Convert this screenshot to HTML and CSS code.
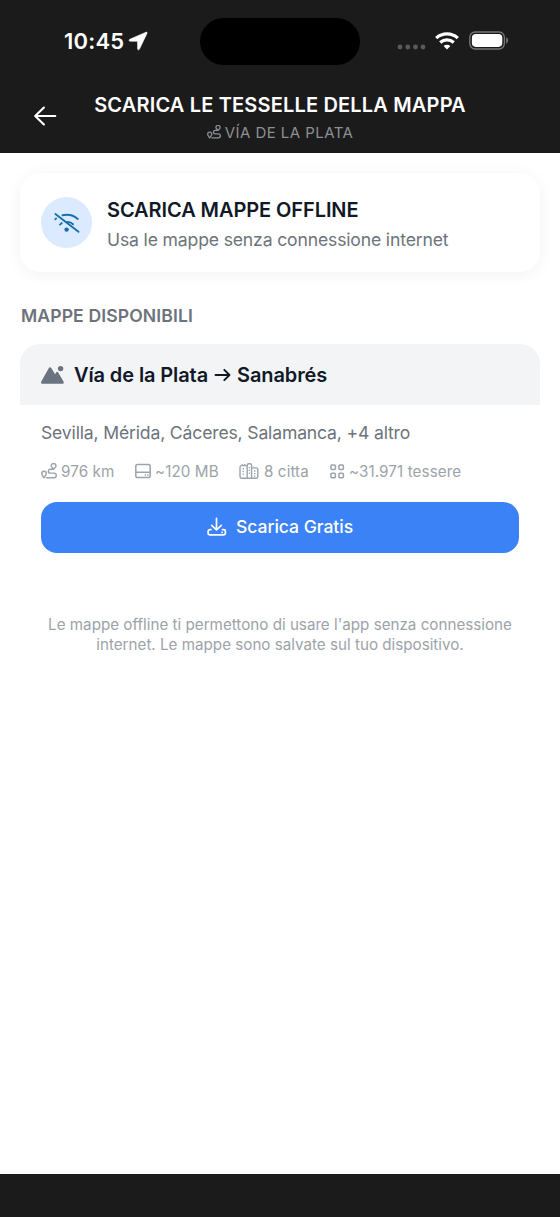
FILE: index.html
```html
<!DOCTYPE html>
<html lang="it">
<head>
<meta charset="utf-8">
<title>Scarica le tesselle della mappa</title>
<link rel="stylesheet" href="styles.css">
</head>
<body>
<div class="screen">
  <header class="top">
    <div class="status">
      <div class="clock">
        <span class="time">10:45</span>
        <svg class="loc" width="20" height="20" viewBox="0 0 20 20"><path d="M18.1 1.2 1.8 8.3c-1.1.5-.8 1.9.3 1.9l7.4.1.1 7.5c0 1.2 1.4 1.4 1.900.3L19 2.300c.3-.8-.2-1.400-.9-1.100z" fill="#fff" stroke="#fff" stroke-width=".6"/></svg>
      </div>
      <div class="island"></div>
      <div class="signals">
        <svg width="29" height="6" viewBox="0 0 29 6" fill="#5a5a5c"><circle cx="3" cy="3" r="2.4"/><circle cx="10.8" cy="3" r="2.4"/><circle cx="18.5" cy="3" r="2.4"/><circle cx="26" cy="3" r="2.4"/></svg>
        <svg class="wifi" width="24" height="18" viewBox="0 0 24 18" fill="none" stroke="#fff" stroke-width="3.3"><path d="M1.2 6.1C7.4.5 16.6.5 22.8 6.1"/><path d="M5.2 10.4c4-3.500 9.600-3.500 13.600 0"/><path d="M12 17.400l-3.400-3.400c2-1.700 4.800-1.700 6.800 0z" fill="#fff" stroke="none"/></svg>
        <svg class="battery" width="40" height="20" viewBox="0 0 40 20"><rect x=".8" y="1" width="34.6" height="17" rx="5.4" fill="none" stroke="#777779" stroke-width="1.3"/><rect x="2.900" y="3.100" width="30.400" height="12.800" rx="3.800" fill="#fff"/><path d="M37.2 6.300c2.500 1 2.500 5.400 0 6.400z" fill="#777779"/></svg>
      </div>
    </div>
    <div class="nav">
      <svg class="back" width="24" height="20" viewBox="0 0 24 20" fill="none" stroke="#fff" stroke-width="2.1" stroke-linecap="round" stroke-linejoin="round"><path d="M22.300 10H2.300M10.900 1.500 2.200 10l8.700 8.500"/></svg>
      <div class="titles">
        <h1 class="title">SCARICA LE TESSELLE DELLA MAPPA</h1>
        <div class="subtitle">
          <svg class="route-small" width="14" height="14" viewBox="0 0 16 16" fill="none" stroke="currentColor" stroke-width="1.5" stroke-linecap="round" stroke-linejoin="round"><path d="M3 14.700C1.700 13 .8 12 .8 10.500a2.300 2.300 0 0 1 4.600 0C5.400 12 4.300 13 3 14.700z"/><path d="M12.600 6.200C11.200 4.500 10.200 4 10.200 2.900a2.300 2.300 0 0 1 4.800 0c0 1.100-1 1.800-2.400 3.300zH9.300a1.900 1.900 0 0 0 0 3.900h3.700a2.300 2.300 0 0 1 0 4.600H5.600"/></svg>
          <span class="subtitle-text">VÍA DE LA PLATA</span>
        </div>
      </div>
    </div>
  </header>
  <main class="content">
    <section class="intro">
      <div class="badge">
        <svg width="28" height="24" viewBox="0 0 28 24" fill="none" stroke="#1471aa" stroke-width="1.9" stroke-linecap="round" stroke-linejoin="round"><path d="M2.400 3 25.500 20.800M9.500 4.300c5.500-1.200 10.800-.2 15.300 3.600M14.500 10.900c2.300.1 4 .8 5.600 2.300M7 13.600l1.700-1.500M2.300 8.200l.8-.6"/><circle cx="13.600" cy="18.600" r="2.200" fill="#1471aa" stroke="none"/></svg>
      </div>
      <div class="intro-copy">
        <h2 class="intro-title">SCARICA MAPPE OFFLINE</h2>
        <p class="intro-text">Usa le mappe senza connessione internet</p>
      </div>
    </section>
    <h3 class="section-label">MAPPE DISPONIBILI</h3>
    <article class="map">
      <div class="map-head">
        <svg width="23" height="20" viewBox="0 0 23 20" fill="#6b7280"><path d="M7.700 3.200c.7-1.200 2-1.200 2.700 0l3.700 6 1-1.700c.6-.9 1.500-.9 2.100 0l5.300 9c.7 1.200.1 2.300-1.300 2.300H1.600C.2 18.800-.4 17.700.3 16.500z"/><circle cx="19.600" cy="3.600" r="2.700"/></svg>
        <h2 class="map-title">Vía de la Plata <svg class="arrow" width="17" height="14" viewBox="0 0 17 14" fill="none" stroke="currentColor" stroke-width="1.900" stroke-linecap="round" stroke-linejoin="round" role="img" aria-label="→"><path d="M1.500 7h14M10.300 1.800 15.500 7l-5.200 5.200"/></svg> Sanabrés</h2>
      </div>
      <div class="map-body">
        <p class="cities">Sevilla, Mérida, Cáceres, Salamanca, +4 altro</p>
        <div class="stats">
          <div class="stat s-km">
            <svg width="16" height="16" viewBox="0 0 16 16" fill="none" stroke="currentColor" stroke-width="1.400" stroke-linecap="round" stroke-linejoin="round"><path d="M3 14.700C1.700 13 .7 12 .7 10.500a2.300 2.300 0 0 1 4.600 0C5.300 12 4.300 13 3 14.700z"/><path d="M12.600 6.200C11.200 4.500 10.200 4 10.200 2.900a2.300 2.300 0 0 1 4.800 0c0 1.100-1 1.800-2.400 3.300zH9.300a1.900 1.900 0 0 0 0 3.900h3.700a2.300 2.300 0 0 1 0 4.600H5.600"/></svg>
            <span>976 km</span>
          </div>
          <div class="stat s-mb">
            <svg width="16" height="16" viewBox="0 0 16 16" fill="none" stroke="currentColor" stroke-width="1.500"><rect x=".8" y="1.400" width="14.400" height="13.200" rx="1.800"/><path d="M.8 9.200h14.400"/><path d="M9.700 11.900h1.300M12.200 11.900h1.300"/></svg>
            <span>~120 MB</span>
          </div>
          <div class="stat s-city">
            <svg width="20" height="16" viewBox="0 0 20 16" fill="none" stroke="currentColor" stroke-width="1.400" stroke-linejoin="round"><path d="M7.500 15.200H2.700a1.700 1.700 0 0 1-1.700-1.700V4.200c0-1 .7-1.600 1.700-1.600h4.800M3.400 2.400V.9M5.800 2.400V.9M12.600 4.900h4.500c1 0 1.700.7 1.700 1.600v7c0 1-.7 1.700-1.700 1.700H8.200V2.500C8.200 1.400 8.900.8 9.900.8h1c1 0 1.700.7 1.700 1.700v12.700"/><path d="M3.600 5.700h1.300M3.600 8.400h1.300M3.600 11.100h1.300M10.400 4v1.200M10.400 6.800V8M10.400 9.600v1.200M15 8h1.400M15 10.600h1.400M15 13.100h1.400"/></svg>
            <span>8 citta</span>
          </div>
          <div class="stat s-tiles">
            <svg width="15" height="15" viewBox="0 0 15 15" fill="none" stroke="currentColor" stroke-width="1.500"><rect x=".9" y="1" width="4.500" height="4.500" rx="1"/><rect x="8.900" y="1" width="4.500" height="4.500" rx="1"/><rect x=".9" y="9.200" width="4.500" height="4.500" rx="1"/><rect x="8.900" y="9.200" width="4.500" height="4.500" rx="1"/></svg>
            <span>~31.971 tessere</span>
          </div>
        </div>
        <button class="download" type="button">
          <svg width="20" height="20" viewBox="0 0 20 20" fill="none" stroke="#fff" stroke-width="1.700" stroke-linecap="round" stroke-linejoin="round"><path d="M9.500 1.300v11.500M4.700 8.400l4.800 4.600 4.800-4.600M4 12.600H3a1.900 1.900 0 0 0-1.900 1.900V16c0 1.100.9 1.900 1.900 1.900h13.500c1.100 0 1.900-.8 1.900-1.900v-1.500c0-1.200-.9-1.900-1.900-1.900h-1M15 15.300h.2"/></svg>
          <span>Scarica Gratis</span>
        </button>
      </div>
    </article>
    <p class="note">Le mappe offline ti permettono di usare l'app senza connessione<br>internet. Le mappe sono salvate sul tuo dispositivo.</p>
  </main>
  <footer class="bottom"></footer>
</div>
</body>
</html>
```
FILE: styles.css
```css
* { box-sizing: border-box; }
body { margin: 0; background: #fff; font-family: Inter, "Liberation Sans", sans-serif; }
h1, h2, h3, p { margin: 0; }
svg { display: block; flex: none; }
.screen { width: 560px; height: 1217px; display: flex; flex-direction: column; overflow: hidden; white-space: nowrap; }
.top { height: 153px; flex: none; background: #1b1b1b; }
.status { height: 83px; display: grid; grid-template-columns: 200px 160px 200px; align-items: center; }
.clock { display: flex; align-items: center; padding: 0 0 1px 64px; gap: 4px; color: #fff; }
.time { font-size: 22px; line-height: 28px; font-weight: 600; letter-spacing: .2px; }
.island { height: 47px; border-radius: 24px; background: #000; }
.signals { display: flex; align-items: center; padding: 0 0 1px 37px; }
.signals svg:first-child { margin-top: 12px; }
.wifi { margin-left: 9px; }
.battery { margin-left: 9.5px; }
.nav { height: 70px; display: grid; grid-template-columns: 60px 440px 60px; }
.back { margin: 23px 0 0 33px; }
.titles { display: flex; flex-direction: column; align-items: center; padding-top: 9px; }
.title { font-size: 20px; line-height: 26px; font-weight: 600; color: #fff; letter-spacing: .17px; }
.subtitle { display: flex; align-items: center; gap: 4px; height: 20px; margin-top: 4px; color: #8c9094; font-size: 15px; letter-spacing: .45px; }
.content { flex: 1; padding: 20px 20px 0; }
.intro { height: 99px; border-radius: 20px; background: #fff; box-shadow: 0 2px 15px rgba(0,0,0,.055); display: flex; align-items: center; gap: 15px; padding-left: 21px; }
.badge { width: 51px; height: 51px; border-radius: 50%; background: #dbeafe; display: flex; align-items: center; justify-content: center; }
.intro-copy { padding-top: 2px; }
.intro-title { font-size: 20px; line-height: 26px; font-weight: 600; color: #111827; letter-spacing: -.08px; }
.intro-text { margin-top: 6px; font-size: 17.6px; line-height: 22px; color: #6d737b; letter-spacing: -.16px; }
.section-label { margin: 33px 0 0 1px; font-size: 17.6px; line-height: 22px; font-weight: 600; color: #6d737b; letter-spacing: .1px; }
.map { margin-top: 17px; border-radius: 20px; overflow: hidden; }
.map-head { height: 61px; padding-left: 21px; display: flex; align-items: center; gap: 10px; background: #f3f4f6; }
.map-title { display: flex; align-items: center; gap: 6px; font-size: 20px; line-height: 26px; font-weight: 600; color: #111827; letter-spacing: -.11px; }
.map-body { padding: 17px 21px 20px; }
.cities { font-size: 17.6px; line-height: 22px; color: #6d737b; letter-spacing: -.17px; }
.stats { display: flex; height: 20px; margin-top: 17px; align-items: center; color: #9ca3a9; font-size: 15.2px; letter-spacing: .1px; }
.stat { display: flex; align-items: center; gap: 4px; }
.s-km { width: 94px; }
.s-mb { width: 104px; }
.s-city { width: 91px; }
.s-city svg { margin-right: 1px; }
.download { width: 478px; height: 51px; margin-top: 20.5px; padding: 0; border: 0; border-radius: 16px; background: #3b82f6; color: #fff; display: flex; align-items: center; justify-content: center; gap: 9px; font: 500 17.6px/22px Inter, "Liberation Sans", sans-serif; letter-spacing: -.05px; }
.note { margin-top: 42px; text-align: center; font-size: 15.2px; line-height: 20.5px; color: #9ca3a9; }
.bottom { height: 43px; flex: none; background: #1b1b1b; }
```
